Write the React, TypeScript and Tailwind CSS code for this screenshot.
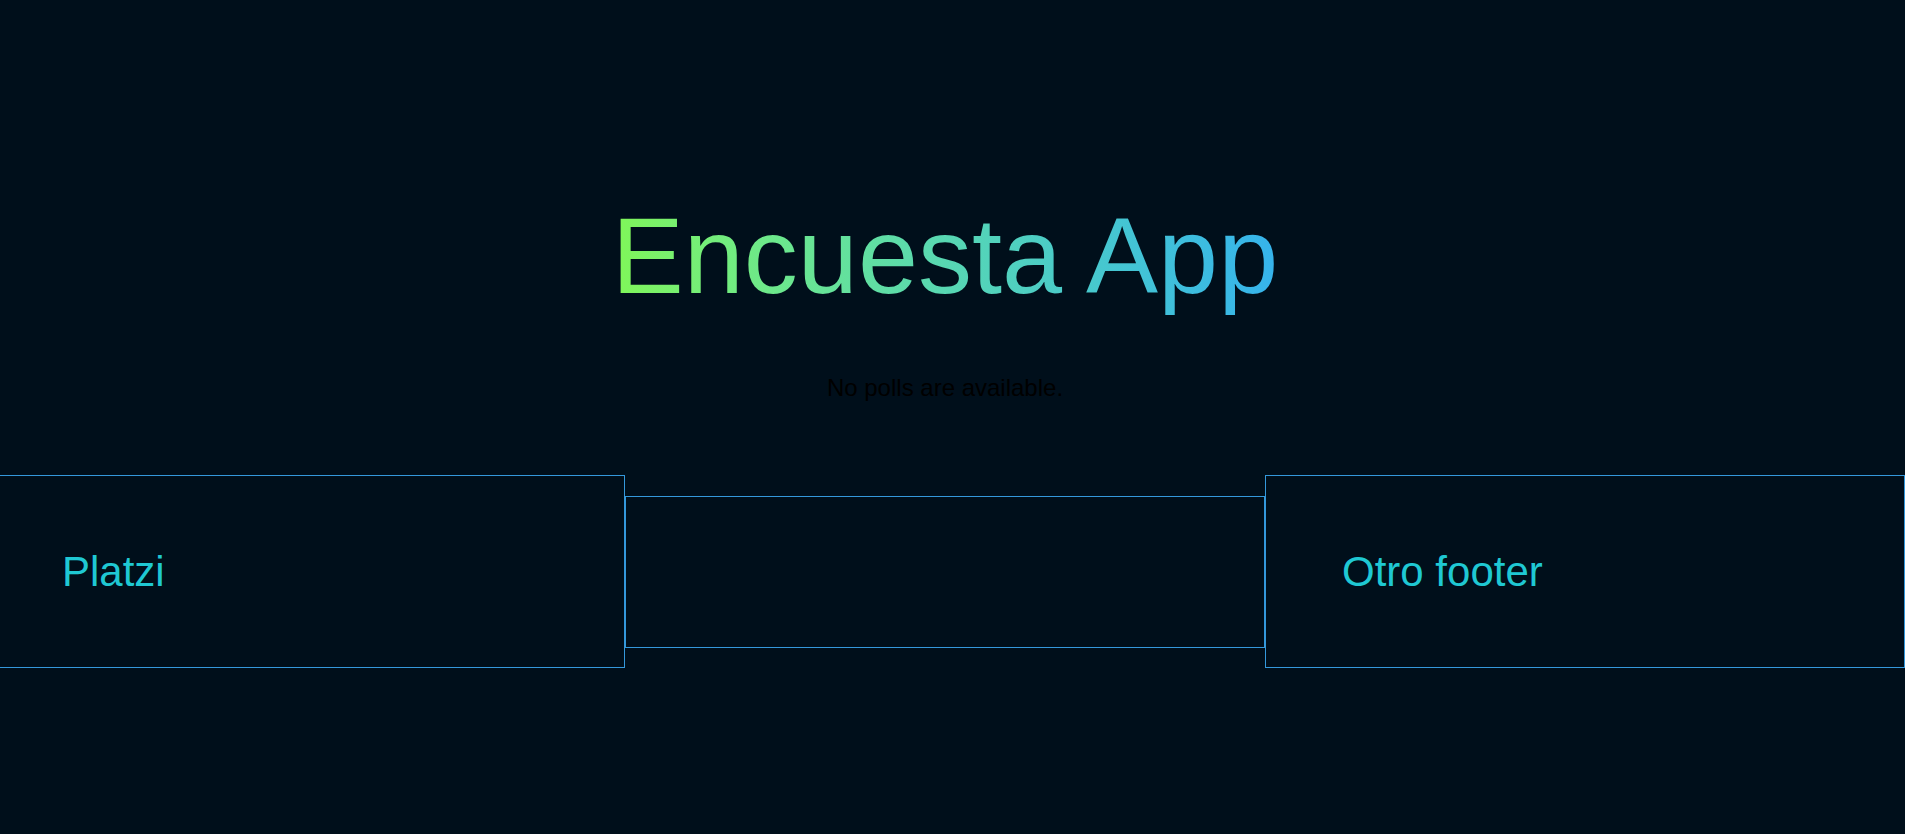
import React from "react";

const FooterBox: React.FC<{ label?: string }> = ({ label }) => {
  return (
    <div className="h-[193px] border border-[#3498db] flex items-center pl-[76px]">
      {label && (
        <span className="text-[42px] leading-[48px] text-[#1fc8d3]">{label}</span>
      )}
    </div>
  );
};

const App: React.FC = () => {
  return (
    <div className="min-h-screen bg-[#000f1b] overflow-hidden font-['Liberation_Sans',Arial,sans-serif]">
      <div className="w-[1920px] ml-[-15px] pt-[194px]">
        <h1 className="w-fit mx-auto text-[108px] leading-[124px] font-normal bg-gradient-to-r from-[#80f657] to-[#36b3ec] bg-clip-text text-transparent">
          Encuesta App
        </h1>
        <p className="mt-[56px] text-center text-[24px] leading-[28px] text-black">
          No polls are available.
        </p>
        <div className="mt-[73px] grid grid-cols-3 items-center">
          <FooterBox label="Platzi" />
          <div className="h-[152px] border border-[#3498db]"></div>
          <FooterBox label="Otro footer" />
        </div>
      </div>
    </div>
  );
};

export default App;
